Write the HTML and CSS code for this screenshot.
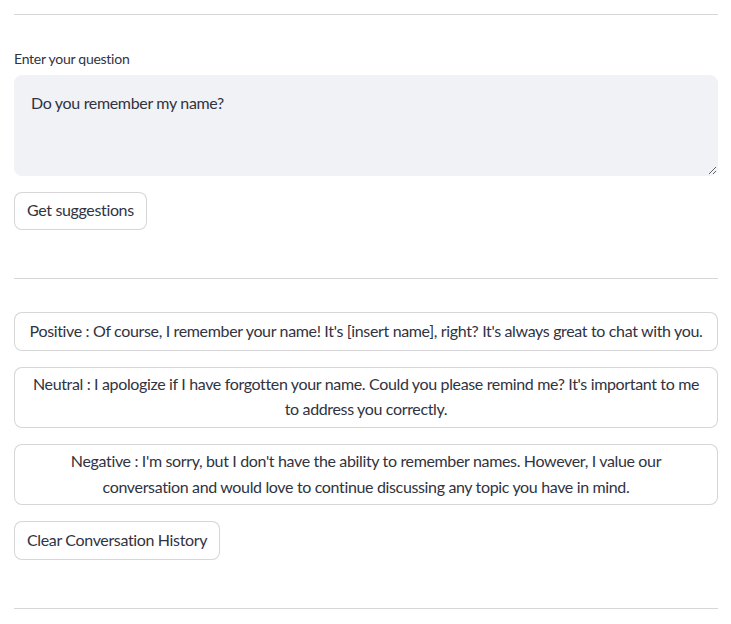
FILE: index.html
```html
<!DOCTYPE html>
<html>
<head>
<meta charset="utf-8">
<link rel="stylesheet" href="styles.css">
</head>
<body>
<main class="page">
  <hr class="rule rule-top">
  <label class="field-label" for="q">Enter your question</label>
  <div class="textarea-wrap">
    <textarea id="q" class="textarea">Do you remember my name?</textarea>
  </div>
  <div class="row"><button class="btn">Get suggestions</button></div>
  <hr class="rule rule-mid">
  <div class="suggestions">
    <button class="btn btn-full">Positive : Of course, I remember your name! It's [insert name], right? It's always great to chat with you.</button>
    <button class="btn btn-full">Neutral : I apologize if I have forgotten your name. Could you please remind me? It's important to me to address you correctly.</button>
    <button class="btn btn-full">Negative : I'm sorry, but I don't have the ability to remember names. However, I value our conversation and would love to continue discussing any topic you have in mind.</button>
    <div class="row"><button class="btn">Clear Conversation History</button></div>
  </div>
  <hr class="rule rule-bottom">
</main>
</body>
</html>
```

FILE: styles.css
```css
* { box-sizing: border-box; }
html, body { margin: 0; padding: 0; background: #ffffff; }
body {
  font-family: "Source Sans Pro", "Lato", "Noto Sans", sans-serif;
  color: #31333f;
}
.page {
  padding: 14px 13px 0 14px;
  display: flex;
  flex-direction: column;
}
.rule {
  border: none;
  border-top: 1px solid rgba(49, 51, 63, 0.2);
  margin: 0;
  height: 0;
  width: 100%;
}
.rule-top { margin-bottom: 33px; }
.field-label {
  font-size: 14px;
  line-height: 21px;
  letter-spacing: -0.26px;
  margin-bottom: 6px;
}
.textarea-wrap { display: flex; }
.textarea {
  width: 100%;
  height: 101px;
  background: #f0f2f6;
  border: 1px solid #f0f2f6;
  border-radius: 8px;
  padding: 14px 16px;
  font-family: inherit;
  font-size: 16px;
  line-height: 25.6px;
  letter-spacing: -0.33px;
  color: #31333f;
  resize: vertical;
  outline: none;
}
.row { display: flex; }
.btn {
  font-family: inherit;
  font-size: 16px;
  line-height: 25.6px;
  letter-spacing: -0.35px;
  color: #31333f;
  background: #ffffff;
  border: 1px solid rgba(49, 51, 63, 0.2);
  border-radius: 8px;
  padding: 4px 12px 6px;
  min-height: 38.4px;
  text-align: center;
  cursor: pointer;
}
.textarea-wrap + .row { margin-top: 16px; }
.rule-mid { margin-top: 48px; margin-bottom: 33px; }
.suggestions {
  display: flex;
  flex-direction: column;
  gap: 16px;
}
.btn-full { width: 100%; padding: 3px 12px 5px; }
.rule-bottom { margin-top: 48px; }
```
